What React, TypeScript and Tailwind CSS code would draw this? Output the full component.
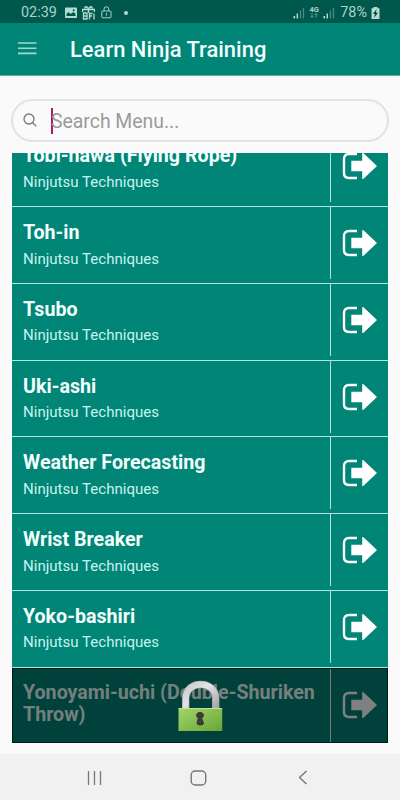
import React from "react";

const items = ["Tobi-nawa (Flying Rope)", "Toh-in", "Tsubo", "Uki-ashi", "Weather Forecasting", "Wrist Breaker", "Yoko-bashiri"];

function ExitArrow({ className }: { className: string }) {
  return (
    <svg className={className} width="36" height="28" viewBox="0 0 36 28" fill="none">
      <path d="M16 2H8Q3 2 3 7V21Q3 26 8 26H16" stroke="currentColor" strokeWidth="2.400" />
      <path d="M10.300 8.800H21.200V1.500Q21.500 .5 22.500 1.200L36 14L22.500 26.800Q21.500 27.500 21.200 26.500V19.200H10.300Z" fill="currentColor" />
    </svg>
  );
}

function Signal() {
  return (
    <svg width="12" height="12" viewBox="0 0 12 12" fill="#b5dcd4">
      <path d="M.500 9h1.600v2.400H.500z" />
      <path d="M3.600 6.500h1.400v4.900H3.600z" />
      <path opacity=".4" d="M6.800 3.500h1.300v7.900H6.800zM9.800 .7h1.300v10.700H9.800z" />
    </svg>
  );
}

function StatusBar() {
  return (
    <div className="flex h-[23px] items-center bg-[#00574b] pt-[3px] pl-[21px] text-[#a9d3cb]">
      <span className="mt-px w-[44px] text-[14.400px] leading-none">02:39</span>
      <svg width="12" height="12" viewBox="0 0 12 12" className="shrink-0">
        <rect y=".5" width="12" height="10.500" rx="1" fill="#b5dcd4" />
        <path d="M1.500 9V7l2-2 2 2 3-2 2 2v2z" fill="#00574b" />
        <circle cx="8.700" cy="3.200" r="1" fill="#00574b" />
      </svg>
      <svg width="13" height="14" viewBox="0 0 13 14" className="mb-px ml-[5px] shrink-0" fill="none" stroke="#b5dcd4">
        <path d="M6.500 3C5 0 2.500 0 3 2.500M6.500 3C8 0 10.500 0 10 2.500M.5 6V3.500h12V6M6.500 3.500V7" strokeWidth="1.400" />
        <path d="M1.500 7h3.500v6H1.500zM1.500 10H5M7.500 13.500V7.500h3M7.500 10h2.500M12 7.500v6" strokeWidth="1.300" />
      </svg>
      <svg width="11" height="13" viewBox="0 0 11 13" className="mb-px ml-[6px] shrink-0" fill="none" stroke="#a9d3cb">
        <rect x=".8" y="5" width="9.200" height="6.800" rx="1" />
        <path d="M3 5V3.200a2.400 2.400 0 0 1 4.800 0V5M5.400 7v2.700" />
      </svg>
      <span className="mb-px ml-[12px] size-[4px] shrink-0 rounded-full bg-[#b5dcd4]" />
      <div className="ml-auto flex items-center pr-[20px]">
        <Signal />
        <span className="mx-[3px] mb-0.5 flex w-[12px] flex-col items-center">
          <span className="text-[7.500px] leading-[7px] font-bold">4G</span>
          <svg width="8" height="5" viewBox="0 0 8 5" fill="none" stroke="#6ea69c" strokeWidth=".8">
            <path d="M2 0v4.400M.5 3L2 4.500 3.500 3M6 5V.6M4.500 2L6 .5 7.500 2" />
          </svg>
        </span>
        <Signal />
        <span className="mt-px ml-[5px] text-[14.400px] leading-none">78%</span>
        <svg width="9" height="12" viewBox="0 0 9 12" className="mb-px ml-[4px]">
          <path d="M2.500 0h4v1.300H8.500V12H.500V1.300h2z" fill="#b5dcd4" />
          <path d="M5.500 2.300L2 7h2l-.8 3.700L7 5.800H5z" fill="#00453c" />
        </svg>
      </div>
    </div>
  );
}

function Padlock() {
  return (
    <svg width="46" height="52" viewBox="0 0 46 52" className="absolute top-[11px] left-[164px]">
      <defs>
        <linearGradient id="shackle" x1="0" x2="1" y1="0" y2="1">
          <stop stopColor="#c9c9c9" />
          <stop offset=".4" stopColor="#e3e3e3" />
          <stop offset="1" stopColor="#a6a6a6" />
        </linearGradient>
        <linearGradient id="body" x1="0" x2="1" y1="0" y2="1">
          <stop stopColor="#a5d56e" />
          <stop offset="1" stopColor="#67a633" />
        </linearGradient>
      </defs>
      <path d="M8.700 29V18.500C8.700 -.3 38.700 -.3 38.700 18.500V29" fill="none" stroke="#999999" strokeWidth="7.400" />
      <path d="M8.700 29V18.500C8.700 -.3 38.700 -.3 38.700 18.500V29" fill="none" stroke="url(#shackle)" strokeWidth="6.200" />
      <rect x="1.500" y="28" width="43.700" height="23" rx=".6" fill="url(#body)" />
      <path d="M1.700 28.500H45" stroke="#c0e58e" />
      <path d="M20 43L21.300 38.500C18 35 20 32.500 23 32.500S28 35 24.700 38.500L26.500 43Q26.500 45 23.200 45T20 43Z" fill="#3d3e38" stroke="#343530" />
    </svg>
  );
}

export default function App() {
  return (
    <div className="flex h-[800px] w-[400px] flex-col overflow-hidden bg-[#fafafa] font-['Roboto','Liberation_Sans',sans-serif]">
      <StatusBar />
      <header className="flex h-[53px] items-center border-b border-[#65aea3] bg-[#008577] pl-[18px]">
        <svg width="19" height="14" viewBox="0 0 19 14" className="mb-[3px]" stroke="#9edbd2" strokeWidth="1.600">
          <path d="M0 2h18.500M0 7.200h18.500M0 12.400h18.500" />
        </svg>
        <h1 className="mt-[2px] ml-[33px] text-[21.950px] leading-none font-medium text-[#f0fffc]">Learn Ninja Training</h1>
      </header>
      <div className="mx-[11px] mt-[23px] flex h-[43px] shrink-0 items-center rounded-full border-2 border-[#e3e2e8] pl-[10px]">
        <svg width="14" height="14" viewBox="0 0 14 14" className="mb-[2px]" fill="none" stroke="#777777" strokeWidth="1.300">
          <circle cx="6" cy="6" r="5" />
          <path d="M9.700 9.700l3.500 3.500" />
        </svg>
        <span className="ml-[14px] h-[26px] w-[2px] bg-[#b5176a]" />
        <span className="-ml-[2px] mt-[3px] text-[19.400px] leading-none text-[#9a9a9a]">Search Menu...</span>
      </div>
      <main className="mx-[12px] mt-[11px] flex h-[590px] shrink-0 flex-col justify-end overflow-hidden bg-[#008577]">
        {items.map((name) => (
          <section key={name} className="flex h-[76.750px] shrink-0 border-b border-[#b5e5df]">
            <div className="flex-1 pt-[14px] pl-[11px]">
              <h2 className="text-[19.650px] leading-[23px] font-bold text-[#f2fffd]">{name}</h2>
              <p className="mt-[5.500px] text-[15.050px] leading-[18px] text-[#c9f3ee]">Ninjutsu Techniques</p>
            </div>
            <div className="h-[72px] w-[58px] border-l border-[#b5e5df] pt-[22px] pl-[10px]">
              <ExitArrow className="text-white" />
            </div>
          </section>
        ))}
        <section className="relative flex h-[75.500px] shrink-0 border border-[#001c18] bg-[#00423b]">
          <div className="flex-1 pt-[13px] pl-[10px]">
            <h2 className="text-[19.650px] leading-[22.500px] font-bold whitespace-nowrap text-[#75807e]">
              Yonoyami-uchi (Double-Shuriken
              <br />
              Throw)
            </h2>
          </div>
          <div className="w-[57px] border-l border-[#75807e] pt-[22px] pl-[10px]">
            <ExitArrow className="text-[#808080]" />
          </div>
          <Padlock />
        </section>
      </main>
      <nav className="mt-auto flex h-[46px] items-center bg-[#f1f1f1]">
        <svg width="16" height="14" viewBox="0 0 16 14" className="mt-px ml-[87px]" stroke="#777777" strokeWidth="1.300">
          <path d="M1.500 0v14M7.500 0v14M13.500 0v14" />
        </svg>
        <svg width="17" height="16" viewBox="0 0 17 16" className="mt-px ml-[87px]" fill="none" stroke="#777777" strokeWidth="1.400">
          <rect x="1.200" y="1" width="14.500" height="14" rx="4" />
        </svg>
        <svg width="10" height="15" viewBox="0 0 10 15" className="mt-px ml-[91px]" fill="none" stroke="#777777" strokeWidth="1.400">
          <path d="M8.500 1L1.500 7.500l7 6.500" />
        </svg>
      </nav>
    </div>
  );
}
